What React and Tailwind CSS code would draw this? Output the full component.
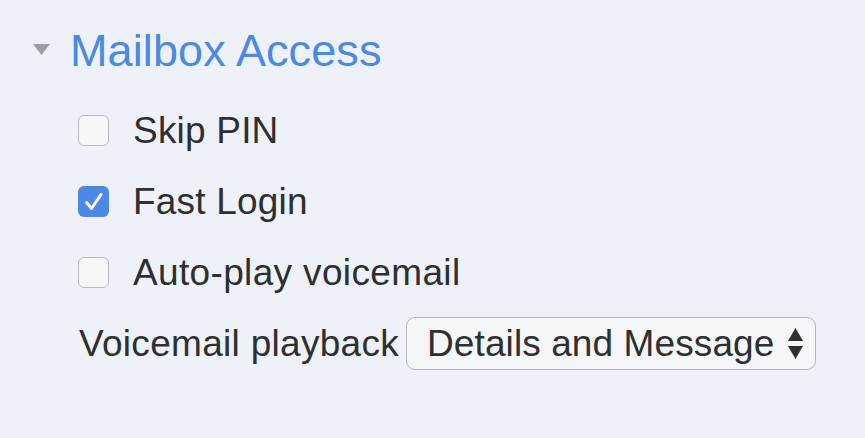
export default function App() {
  const font = { fontFamily: '"Liberation Sans", Arial, sans-serif' };
  const Box = ({ checked }) =>
    checked ? (
      <div className="w-[31px] h-[31px] rounded-[6px] bg-[#4a8ae6] shrink-0">
        <svg width="31" height="31" viewBox="0 0 31 31" className="block">
          <path d="M8.5 16.5 L13.5 22.5 L23 8.5" fill="none" stroke="white" strokeWidth="3" strokeLinecap="round" strokeLinejoin="round" />
        </svg>
      </div>
    ) : (
      <div className="w-[31px] h-[31px] rounded-[6px] border-[1.5px] border-[#b9bcc2] bg-[#f6f7f9] shrink-0" />
    );
  return (
    <div className="w-[865px] h-[438px] bg-[#eef1f7] text-[#2e2f31] overflow-hidden" style={font}>
      <div className="flex items-center pt-[22px] h-[57px] box-content">
        <svg className="ml-[33px] mt-[-2px]" width="17" height="12" viewBox="0 0 17 12">
          <path d="M0 0 L17 0 L8.5 11 Z" fill="#9b9ea3" />
        </svg>
        <span className="ml-[20px] text-[45px] leading-none text-[#4a8ae3] tracking-[0.1px]">Mailbox Access</span>
      </div>
      <div className="flex flex-col pl-[78px] mt-[16px]">
        <div className="flex items-center h-[71px]">
          <Box />
          <span className="ml-[24px] text-[37px] leading-none tracking-[0.2px]">Skip PIN</span>
        </div>
        <div className="flex items-center h-[71px]">
          <Box checked />
          <span className="ml-[24px] text-[37px] leading-none tracking-[0.2px]">Fast Login</span>
        </div>
        <div className="flex items-center h-[71px]">
          <Box />
          <span className="ml-[24px] text-[37px] leading-none tracking-[0.35px]">Auto-play voicemail</span>
        </div>
        <div className="flex items-center h-[71px]">
          <span className="ml-[1px] w-[327px] text-[37px] leading-none tracking-[0.3px] whitespace-nowrap">Voicemail playback</span>
          <div className="w-[410px] h-[53px] rounded-[9px] border-[1.5px] border-[#b4b7bd] bg-[#f5f6f8] flex items-center pl-[20px] pr-[11px]">
            <span className="text-[37px] leading-none flex-1 tracking-[0.1px] whitespace-nowrap">Details and Message</span>
            <svg width="17" height="33" viewBox="0 0 17 33">
              <path d="M8.5 1 L16 14 L1 14 Z" fill="#2e2f31" />
              <path d="M1 19 L16 19 L8.5 32 Z" fill="#2e2f31" />
            </svg>
          </div>
        </div>
      </div>
    </div>
  );
}
